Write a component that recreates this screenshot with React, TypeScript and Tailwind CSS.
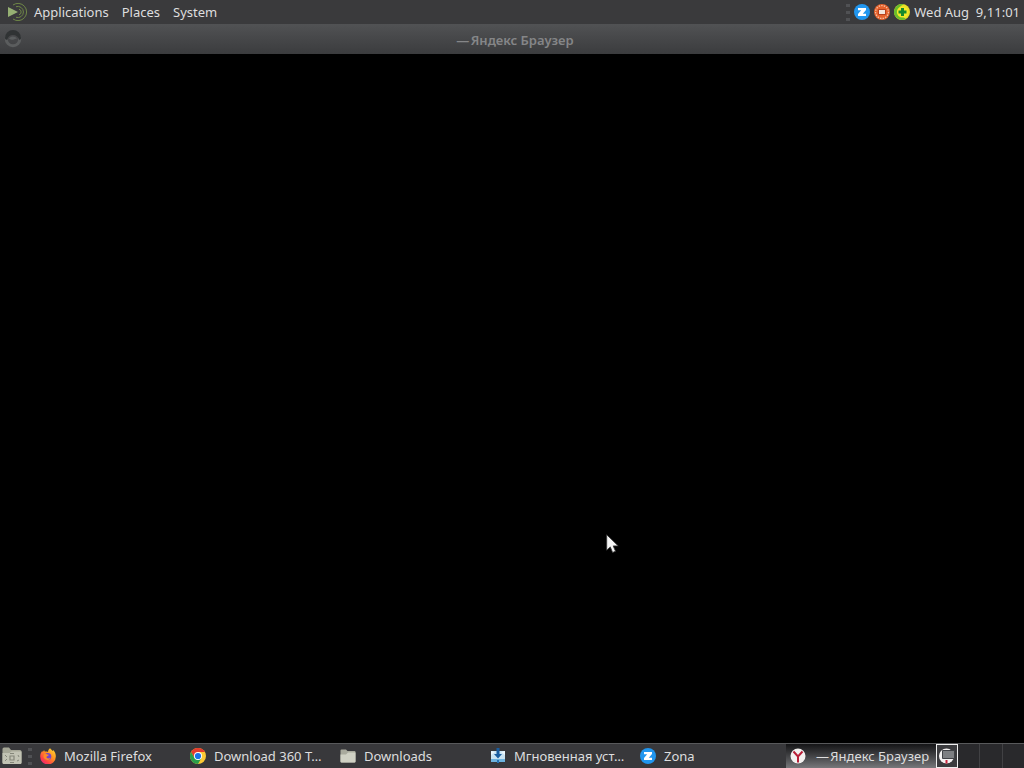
import type { ReactNode } from "react"
import clsx from "clsx"

function ZonaIcon() {
  return (
    <svg viewBox="0 0 16 16" className="size-4 shrink-0" aria-hidden="true">
      <circle cx="8" cy="8" r="8" fill="#2196ef" />
      <path d="M4 4h8v2L8.800 9.700H12V12H4v-2l3.200-3.700H4z" fill="#fff" />
    </svg>
  )
}

function MateLogo() {
  return (
    <svg viewBox="0 0 20 20" className="size-5 shrink-0" aria-hidden="true">
      <path d="M0 5l10 5-10 5z" fill="#96b073" />
      <g fill="none" stroke="#6f8747">
        <path d="M5 3A8.600 8.600 0 1 1 5 17" />
        <path d="M8 4.700a5.600 5.600 0 1 1 0 10.600" />
        <path d="M11 7.200a2.900 2.900 0 0 1 0 5.600" />
      </g>
    </svg>
  )
}

function WindowMenuIcon() {
  return (
    <svg viewBox="0 0 18 18" className="size-[18px]" aria-hidden="true">
      <circle cx="9" cy="9" r="6.800" fill="none" stroke="#5b5d5e" strokeWidth="3" />
      <path d="M1 8a8 8 0 0 1 16 0c0 1.500-1 2-2 1.500C14 6.500 12 5 9 5S4 6.500 3.500 9.500C2 10 1 9.500 1 8z" fill="#303334" />
      <path d="M5 9c1-3 6-3.500 8 0-2-1-3 1-5 .8S6 9 5 9z" fill="#5b5e5f" />
    </svg>
  )
}

function NetworkIcon() {
  return (
    <svg viewBox="0 0 16 16" className="size-4 shrink-0" aria-hidden="true">
      <circle cx="8" cy="8" r="8" fill="#e5622c" />
      <circle cx="8" cy="8" r="6.400" fill="none" stroke="#f6c3a8" strokeWidth="1.200" strokeDasharray="1.400 1.200" />
      <rect x="4" y="5" width="8" height="6" rx="1" fill="#b5401d" />
      <rect x="5" y="6" width="6" height="4" fill="#f3e5dc" />
    </svg>
  )
}

function PlusIcon() {
  return (
    <svg viewBox="0 0 16 16" className="size-4 shrink-0" aria-hidden="true">
      <circle cx="8" cy="8" r="8" fill="#e9df25" />
      <path d="M1.100 12A8 8 0 0 1 10 .3C5 2 3.500 6 5 9s4 4 7 5.900A8 8 0 0 1 1.100 12z" fill="#69bc2c" />
      <circle cx="8.500" cy="8" r="5.600" fill="#f5e928" />
      <path d="M7 4h3v2.500h2.500v3H10V12H7V9.500H4.500v-3H7z" fill="#168a2d" />
    </svg>
  )
}

function FirefoxIcon() {
  return (
    <svg viewBox="0 0 16 16" className="size-4 shrink-0" aria-hidden="true">
      <defs>
        <linearGradient id="fox" x1="1" y1="0" x2="0.200" y2="1">
          <stop offset="0" stopColor="#ffe03a" />
          <stop offset="0.450" stopColor="#ff9420" />
          <stop offset="0.800" stopColor="#ff4247" />
          <stop offset="1" stopColor="#e8237c" />
        </linearGradient>
      </defs>
      <path d="M10 .2c1.200 1 2 1.800 2.300 2.800.5-.1.800-.5.800-.9C15 4 16 6.300 15.800 8.700A7.800 7.800 0 0 1 .2 8.600c-.1-2.500.8-4.400 2.100-5.700l.5 1.200L4.100 2l.6 1.600C6 3.300 7 3.500 8 3.900 8 2.500 8.700 1.200 10 .2z" fill="url(#fox)" />
      <circle cx="7.800" cy="8.400" r="3.500" fill="#7545c9" />
      <path d="M4.200 6.300c1.200-.8 2.300-.4 3.200.2 1 0 1.500.2 1.500.6-.2.900-2.300.9-2.500 2.100.6 1.500 2.800 1.500 4.200.5-.7 2.600-5 3.400-6.700.4-.6-1.300-.5-2.700.3-3.800z" fill="#ff8a25" />
    </svg>
  )
}

function ChromeIcon() {
  return (
    <svg viewBox="0 0 16 16" className="size-4 shrink-0" aria-hidden="true">
      <circle cx="8" cy="8" r="8" fill="#fcc934" />
      <path d="M1.070 4A8 8 0 0 1 14.930 4H8L4.540 10z" fill="#e33b2e" />
      <path d="M1.070 4A8 8 0 0 0 8 16l3.460-6H4.540z" fill="#2c9e4b" />
      <circle cx="8" cy="8" r="4" fill="#fff" />
      <circle cx="8" cy="8" r="3.100" fill="#1a73e8" />
    </svg>
  )
}

function FolderIcon() {
  return (
    <svg viewBox="0 0 16 16" className="size-4 shrink-0" aria-hidden="true">
      <path d="M.5 2.500A1 1 0 0 1 1.500 1.500H6L7.500 3h7a1 1 0 0 1 1 1v9.500a1 1 0 0 1-1 1h-13a1 1 0 0 1-1-1z" fill="#a9aa9d" />
      <path d="M.5 6.500H6L8 4.500h7.500v9a1 1 0 0 1-1 1h-13a1 1 0 0 1-1-1z" fill="#d0d1c4" />
    </svg>
  )
}

function FileManagerIcon() {
  return (
    <svg viewBox="0 0 20 18" className="h-[18px] w-5" aria-hidden="true">
      <path d="M.5 2A1.500 1.500 0 0 1 2 .5h5L9 3h9a1.500 1.500 0 0 1 1.500 1.500v11A1.500 1.500 0 0 1 18 17H2a1.500 1.500 0 0 1-1.500-1.500z" fill="#a6a797" />
      <path d="M.5 6h7l2-1.500h10v11A1.500 1.500 0 0 1 18 17H2a1.500 1.500 0 0 1-1.500-1.500z" fill="#c2c3b4" />
      <g fill="none" stroke="#85877a">
        <path d="M8 9h4v4H8z" strokeWidth="1.200" />
        <path d="M3 8l2 2M3 14l2-2M16 8l1 2M15 14l2-1M8 6.500h4M8 15.500h4" />
      </g>
    </svg>
  )
}

function InstallerIcon() {
  return (
    <svg viewBox="0 0 16 16" className="size-4 shrink-0" aria-hidden="true">
      <path d="M1 3h14v10.500H1z" fill="#c9e4f3" />
      <path d="M1 11h14v3H1z" fill="#6db3df" />
      <path d="M1 3l4 1-4 3zM15 3l-4 1 4 3z" fill="#eef8fd" />
      <path d="M6.500 0h3v6H12l-4 4.500L4 6h2.500z" fill="#195d9f" />
      <path d="M7 12h2v3H7z" fill="#2874b2" />
    </svg>
  )
}

function YandexIcon() {
  return (
    <svg viewBox="0 0 16 16" className="size-4 shrink-0" aria-hidden="true">
      <circle cx="8" cy="8" r="7.500" fill="#f3f0ef" />
      <path d="M3.500 3.500L8 8.500l4.500-5M8 8v6.500" fill="none" stroke="#b81f38" strokeWidth="2" />
    </svg>
  )
}

function MiniWindowIcon() {
  return (
    <svg viewBox="0 0 18 18" className="size-[18px] shrink-0" aria-hidden="true">
      <circle cx="8.500" cy="9" r="7.500" fill="#f4f2f2" />
      <path d="M8.500 13v3.500" stroke="#c8243d" strokeWidth="2" />
      <path d="M4.500 3.500h12v8h-12z" fill="#7d7f82" stroke="#404246" />
    </svg>
  )
}

function Grip() {
  return (
    <span className="flex w-1 flex-col gap-1" aria-hidden="true">
      <span className="h-[3px] bg-[#505154]" />
      <span className="h-[3px] bg-[#505154]" />
      <span className="h-[3px] bg-[#505154]" />
    </span>
  )
}

type Task = {
  title: string
  icon: ReactNode
  active?: boolean
}

const tasks: Task[] = [
  { title: "Mozilla Firefox", icon: <FirefoxIcon /> },
  { title: "Download 360 T…", icon: <ChromeIcon /> },
  { title: "Downloads", icon: <FolderIcon /> },
  { title: "Мгновенная уст…", icon: <InstallerIcon /> },
  { title: "Zona", icon: <ZonaIcon /> },
  { title: "—\u200aЯндекс Браузер", icon: <YandexIcon />, active: true },
]

function TopPanel() {
  return (
    <header className="flex h-6 items-center justify-between bg-[#3a3a3c] pl-2 pr-1">
      <nav className="flex items-center gap-[13px]">
        <button className="flex items-center gap-1.5">
          <MateLogo />
          Applications
        </button>
        <button>Places</button>
        <button>System</button>
      </nav>
      <div className="flex items-center gap-1">
        <Grip />
        <button aria-label="Zona"><ZonaIcon /></button>
        <button aria-label="Network"><NetworkIcon /></button>
        <button aria-label="Updates"><PlusIcon /></button>
        <button className="whitespace-pre">Wed Aug  9,11:01</button>
      </div>
    </header>
  )
}

function BrowserWindow() {
  return (
    <main className="relative flex flex-1 flex-col bg-black">
      <div className="flex h-[30px] items-center bg-linear-to-b from-[#515254] to-[#3b3c3e] px-1">
        <button aria-label="Window menu"><WindowMenuIcon /></button>
        <h1 className="flex-1 pt-0.5 pr-3 text-center font-semibold text-[#858688]">—{"\u200a"}Яндекс Браузер</h1>
      </div>
      <svg viewBox="0 0 14 20" className="absolute left-[606px] top-[510px] h-5 w-3.5" aria-hidden="true">
        <path d="M.7.700v15.500l3.600-3.300 2.300 5.600 2.900-1.300-2.300-5.300h5z" fill="#f5f5f5" stroke="#333" strokeWidth=".8" />
      </svg>
    </main>
  )
}

function BottomPanel() {
  return (
    <footer className="flex h-[25px] items-center border-t border-[#58595b] bg-[#38383b]">
      <button aria-label="File manager" className="mx-0.5"><FileManagerIcon /></button>
      <span className="mx-1"><Grip /></span>
      <div className="flex h-full min-w-0 flex-1">
        {tasks.map((task) => (
          <button
            key={task.title}
            className={clsx(
              "flex h-full w-[150px] min-w-0 items-center gap-2 whitespace-nowrap pl-1 text-left",
              task.active && "bg-linear-to-b from-[#151517] to-[#77787b]",
            )}
          >
            {task.icon}
            <span className={clsx(task.active && "ml-0.5")}>{task.title}</span>
          </button>
        ))}
      </div>
      <div className="flex h-full w-[88px] bg-[#29292c]">
        <button aria-label="Workspace 1" className="flex w-[22px] items-center justify-center border border-[#eeeeee] bg-[#3b3b3e]">
          <MiniWindowIcon />
        </button>
        <button aria-label="Workspace 2" className="flex-1 border-r border-[#414144]" />
        <button aria-label="Workspace 3" className="flex-1 border-r border-[#414144]" />
        <button aria-label="Workspace 4" className="flex-1" />
      </div>
    </footer>
  )
}

export default function App() {
  return (
    <div className="flex min-h-screen flex-col bg-black font-['Noto_Sans',sans-serif] text-[13px] leading-5 text-[#dededf]">
      <TopPanel />
      <BrowserWindow />
      <BottomPanel />
    </div>
  )
}
